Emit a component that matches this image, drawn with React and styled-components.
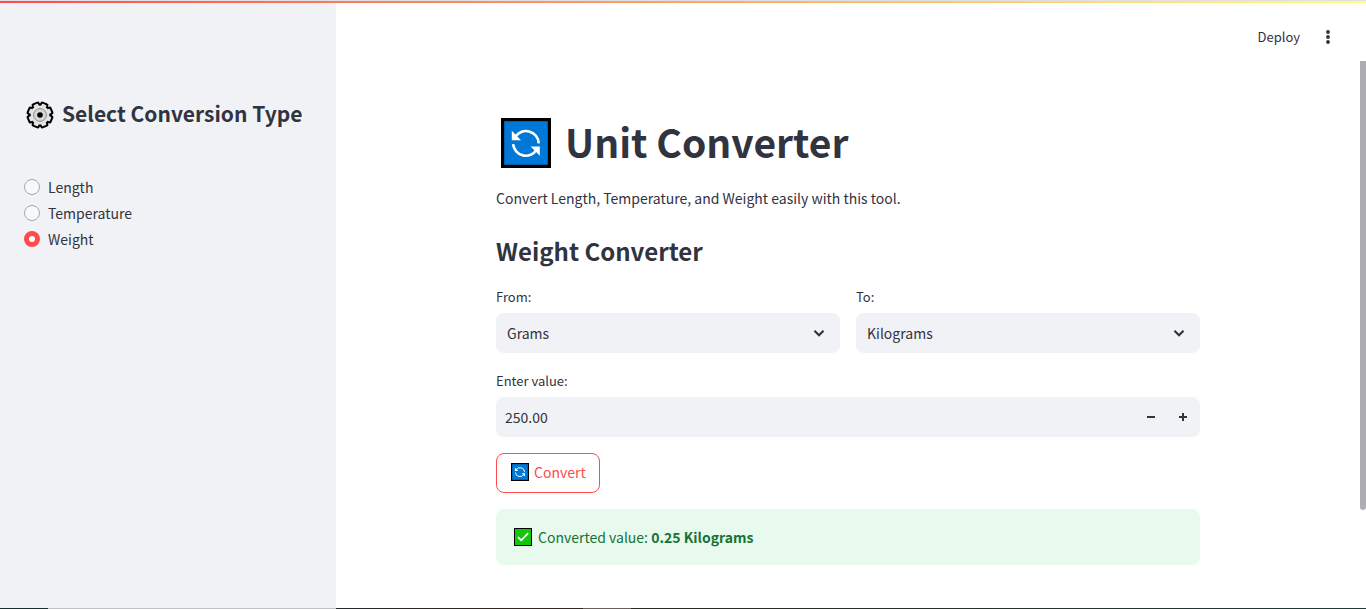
import React, { useState } from 'react';
import styled, { createGlobalStyle, css } from 'styled-components';

const GlobalStyle = createGlobalStyle`
  *, *::before, *::after { box-sizing: border-box; }
  body {
    margin: 0;
    background: #ffffff;
    color: #31333f;
    font-family: 'Noto Sans CJK SC', 'Noto Sans', sans-serif;
    font-size: 14px;
    line-height: 26px;
  }
  button, input, select { font: inherit; color: inherit; }
  h1, h2, p { margin: 0; }
`;

const Page = styled.div`
  position: relative;
  display: flex;
  flex-direction: column;
  min-height: 100vh;
`;

const Decoration = styled.div`
  height: 3px;
  border-top: 1px solid #dfe0e6;
  background: linear-gradient(90deg, #ff4b4b, #fffd80);
`;

const Columns = styled.div`
  flex: 1;
  display: flex;
`;

const Sidebar = styled.aside`
  flex: 0 0 336px;
  padding: 95px 24px 24px;
  background: #f0f2f6;
`;

const SidebarHeading = styled.h2`
  display: flex;
  align-items: center;
  gap: 8px;
  padding-left: 2px;
  font-size: 21px;
  line-height: 30px;
  font-weight: 700;
  white-space: nowrap;
`;

const HeadingText = styled.span`
  padding-bottom: 4px;
`;

const RadioGroup = styled.fieldset`
  margin: 42px 0 0;
  padding: 0;
  border: 0;
`;

const RadioLabel = styled.label`
  display: flex;
  align-items: center;
  gap: 8px;
  cursor: pointer;
`;

const Radio = styled.input`
  appearance: none;
  width: 16px;
  height: 16px;
  margin: 0;
  border: 1px solid #a3a8b4;
  border-radius: 50%;
  background: #f9f9fb;
  &:checked {
    border: 5px solid #ff4b4b;
    background: #ffffff;
  }
`;

const Main = styled.main`
  flex: 1;
  min-width: 0;
  padding-right: 6px;
`;

const Header = styled.header`
  display: flex;
  justify-content: flex-end;
  align-items: center;
  gap: 20px;
  height: 57px;
  padding: 10px 24px 0 0;
`;

const PlainButton = styled.button`
  display: flex;
  align-items: center;
  justify-content: center;
  padding: 0;
  border: 0;
  background: transparent;
  cursor: pointer;
`;

const DeployButton = styled(PlainButton)`
  font-size: 13px;
`;

const Content = styled.div`
  display: flex;
  flex-direction: column;
  gap: 16px;
  max-width: 704px;
  margin: 0 auto;
  padding: 56px 0 43px;
`;

const Title = styled.h1`
  display: flex;
  align-items: center;
  gap: 14px;
  padding-left: 5px;
  font-size: 39px;
  line-height: 50px;
  font-weight: 700;
`;

const Intro = styled.p`
  padding-bottom: 2px;
  line-height: 24px;
`;

const Subheading = styled.h2`
  padding: 6px 0 2px;
  font-size: 24px;
  line-height: 33px;
  font-weight: 700;
`;

const FieldRow = styled.div`
  display: flex;
  gap: 16px;
`;

const Field = styled.div`
  flex: 1;
  display: flex;
  flex-direction: column;
  gap: 4px;
`;

const FieldLabel = styled.label`
  font-size: 13px;
  line-height: 24px;
`;

const control = css`
  height: 40px;
  border: 0;
  border-radius: 8px;
  background: #f0f2f6;
`;

const SelectBox = styled.div`
  position: relative;
`;

const Select = styled.select`
  ${control}
  appearance: none;
  width: 100%;
  padding: 0 32px 0 11px;
`;

const Chevron = styled.svg`
  position: absolute;
  right: 11px;
  top: 10px;
  pointer-events: none;
`;

const NumberBox = styled.div`
  ${control}
  display: flex;
  padding-right: 1px;
`;

const NumberInput = styled.input`
  flex: 1;
  min-width: 0;
  padding: 0 9px;
  border: 0;
  background: transparent;
`;

const StepButton = styled(PlainButton)`
  width: 32px;
`;

const ConvertButton = styled.button`
  align-self: flex-start;
  display: flex;
  align-items: center;
  gap: 5px;
  height: 40px;
  padding: 0 13px 2px 14px;
  border: 1px solid #ff4b4b;
  border-radius: 8px;
  background: #ffffff;
  color: #ff4b4b;
  cursor: pointer;
`;

const Alert = styled.div`
  display: flex;
  align-items: center;
  gap: 6px;
  min-height: 56px;
  padding: 0 18px;
  border-radius: 8px;
  background: #e8f9ee;
  color: #177233;
`;

const ScrollThumb = styled.div`
  position: absolute;
  top: 61px;
  right: 0;
  width: 6px;
  height: 449px;
  border-radius: 0 0 3px 3px;
  background: #adadb3;
`;

const BottomEdge = styled.div`
  position: absolute;
  left: 0;
  right: 0;
  bottom: 0;
  height: 1px;
  background: linear-gradient(90deg,
    #17302f 48px, #bfc0c4 48px 336px, #232a2b 336px, #33271f 500px 583px,
    #6b6059 583px 631px, #2a2a22 631px, #1f3a35);
`;

function GearIcon() {
  const teeth = Array.from({ length: 8 }, (_, i) => i * 45 + 22.5);
  return (
    <svg width="28" height="28" viewBox="0 0 28 28" aria-hidden="true">
      <g fill="#000">
        <circle cx="14" cy="14" r="11.8" />
        {teeth.map((a) => (
          <rect key={a} x="9.8" y="0.6" width="8.4" height="8" rx="1.8" transform={`rotate(${a} 14 14)`} />
        ))}
      </g>
      <g fill="#e3e3e3">
        <circle cx="14" cy="14" r="9.4" />
        {teeth.map((a) => (
          <rect key={a} x="11.6" y="2.6" width="4.8" height="6" rx="0.8" transform={`rotate(${a} 14 14)`} />
        ))}
      </g>
      <circle cx="14" cy="14" r="6.4" fill="#d6d6d6" stroke="#8c8c8c" strokeWidth="1" />
      <circle cx="14" cy="14" r="2.8" fill="#000" />
    </svg>
  );
}

function RefreshIcon({ size }) {
  return (
    <svg width={size} height={size} viewBox="0 0 50 50" aria-hidden="true">
      <rect width="50" height="50" fill="#000" />
      <rect x="3.2" y="3.2" width="43.6" height="43.6" fill="#0078d7" />
      <path d="M14 19.4A12.7 12.7 0 0 1 37.7 25.4M12.1 26.2A12.7 12.7 0 0 0 35.6 31.6" fill="none" stroke="#fff" strokeWidth="2.6" />
      <path d="M10.8 12.8V22.3H20ZM38.8 37.8V28.5H29.6Z" fill="#fff" />
    </svg>
  );
}

function CheckIcon() {
  return (
    <svg width="18" height="18" viewBox="0 0 18 18" aria-hidden="true">
      <rect width="18" height="18" fill="#000" />
      <rect x="1" y="1" width="16" height="16" fill="#16c60c" />
      <path d="M4 9.2L7.2 12.4L14.2 5.2" fill="none" stroke="#fff" strokeWidth="1.7" />
    </svg>
  );
}

function UnitSelect({ id, label, value }) {
  return (
    <Field>
      <FieldLabel htmlFor={id}>{label}</FieldLabel>
      <SelectBox>
        <Select id={id} defaultValue={value}>
          <option>Grams</option>
          <option>Kilograms</option>
        </Select>
        <Chevron width="20" height="20" viewBox="0 0 20 20" aria-hidden="true">
          <path d="M5.5 7.8L10 12.2L14.5 7.8" fill="none" stroke="#31333f" strokeWidth="2.2" />
        </Chevron>
      </SelectBox>
    </Field>
  );
}

export default function App() {
  const [type, setType] = useState('Weight');
  const [amount, setAmount] = useState('250.00');
  const step = (by) => setAmount((v) => (Number(v) + by).toFixed(2));

  return (
    <>
      <GlobalStyle />
      <Page>
        <Decoration />
        <Columns>
          <Sidebar>
            <SidebarHeading>
              <GearIcon />
              <HeadingText>Select Conversion Type</HeadingText>
            </SidebarHeading>
            <RadioGroup aria-label="Conversion type">
              {['Length', 'Temperature', 'Weight'].map((name) => (
                <RadioLabel key={name}>
                  <Radio type="radio" name="type" checked={type === name} onChange={() => setType(name)} />
                  {name}
                </RadioLabel>
              ))}
            </RadioGroup>
          </Sidebar>
          <Main>
            <Header>
              <DeployButton type="button">Deploy</DeployButton>
              <PlainButton type="button" aria-label="Main menu">
                <svg width="16" height="16" viewBox="0 0 16 16" fill="#31333f" aria-hidden="true">
                  <circle cx="8" cy="3" r="1.9" />
                  <circle cx="8" cy="8" r="1.9" />
                  <circle cx="8" cy="13" r="1.9" />
                </svg>
              </PlainButton>
            </Header>
            <Content>
              <Title>
                <RefreshIcon size={50} />
                <HeadingText>Unit Converter</HeadingText>
              </Title>
              <Intro>Convert Length, Temperature, and Weight easily with this tool.</Intro>
              <Subheading>Weight Converter</Subheading>
              <FieldRow>
                <UnitSelect id="from" label="From:" value="Grams" />
                <UnitSelect id="to" label="To:" value="Kilograms" />
              </FieldRow>
              <Field>
                <FieldLabel htmlFor="amount">Enter value:</FieldLabel>
                <NumberBox>
                  <NumberInput id="amount" inputMode="decimal" value={amount} onChange={(e) => setAmount(e.target.value)} />
                  <StepButton type="button" aria-label="Decrease" onClick={() => step(-1)}>
                    <svg width="8" height="8" viewBox="0 0 8 8" aria-hidden="true"><path d="M0 3H8V5H0Z" fill="#31333f" /></svg>
                  </StepButton>
                  <StepButton type="button" aria-label="Increase" onClick={() => step(1)}>
                    <svg width="8" height="8" viewBox="0 0 8 8" aria-hidden="true"><path d="M0 3H3V0H5V3H8V5H5V8H3V5H0Z" fill="#31333f" /></svg>
                  </StepButton>
                </NumberBox>
              </Field>
              <ConvertButton type="button"><RefreshIcon size={18} />Convert</ConvertButton>
              <Alert role="alert">
                <CheckIcon />
                <span>Converted value: <strong>0.25 Kilograms</strong></span>
              </Alert>
            </Content>
          </Main>
        </Columns>
        <ScrollThumb />
        <BottomEdge />
      </Page>
    </>
  );
}
